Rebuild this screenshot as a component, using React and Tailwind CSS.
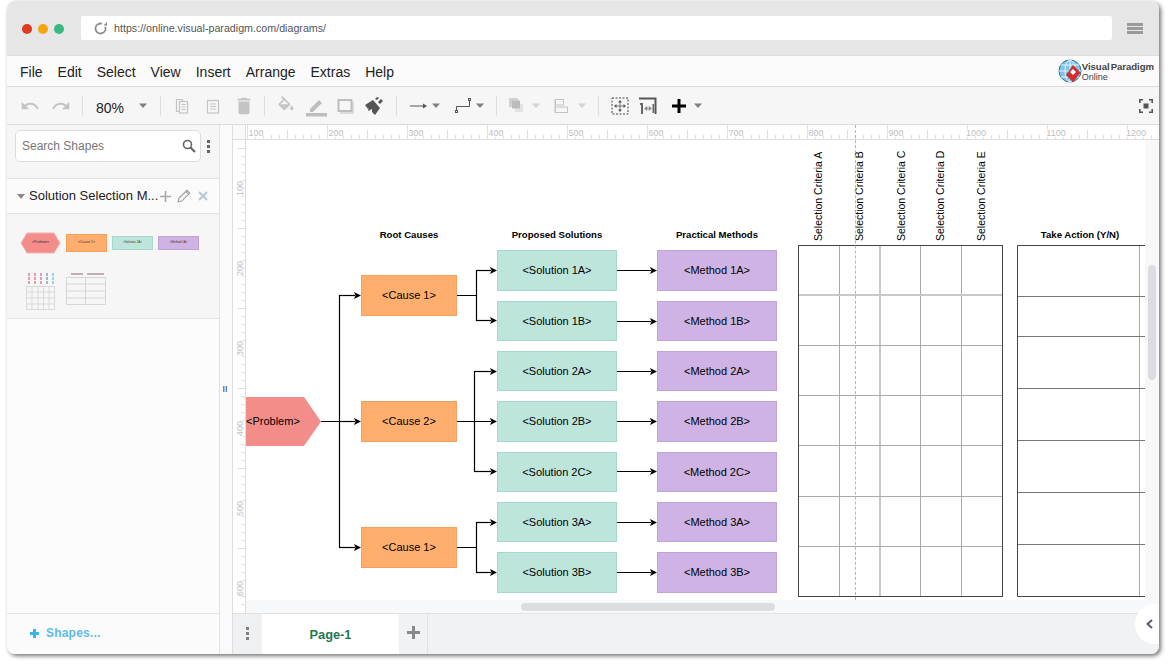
import React from 'react';
import { MdUndo, MdRedo, MdDelete } from 'react-icons/md';

const menus = ['File', 'Edit', 'Select', 'View', 'Insert', 'Arrange', 'Extras', 'Help'];

const rows = [
  { top: 'top-[110px]', h: 'h-[41px]', a: '1A' },
  { top: 'top-[161px]', h: 'h-[40px]', a: '1B' },
  { top: 'top-[211px]', h: 'h-[40px]', a: '2A' },
  { top: 'top-[261px]', h: 'h-[41px]', a: '2B' },
  { top: 'top-[312px]', h: 'h-[40px]', a: '2C' },
  { top: 'top-[362px]', h: 'h-[40px]', a: '3A' },
  { top: 'top-[412px]', h: 'h-[41px]', a: '3B' },
];
const rowY = [270, 321, 371, 421, 471, 522, 572];

const causes = [
  { top: 'top-[135px]', label: '<Cause 1>' },
  { top: 'top-[261px]', label: '<Cause 2>' },
  { top: 'top-[387px]', label: '<Cause 1>' },
];

const criteria = [
  { left: 'left-[566px]', label: 'Selection Criteria A' },
  { left: 'left-[607px]', label: 'Selection Criteria B' },
  { left: 'left-[649px]', label: 'Selection Criteria C' },
  { left: 'left-[688px]', label: 'Selection Criteria D' },
  { left: 'left-[729px]', label: 'Selection Criteria E' },
];

const Sep = ({ ml }) => <div className={`${ml} w-px h-[20px] bg-[#dedede]`} />;

const Caret = ({ ml, light }) => (
  <svg className={ml} width="10" height="6" viewBox="0 0 10 6">
    <path d="M1 0.5h8L5 5z" fill={light ? '#d4d4d4' : '#808080'} />
  </svg>
);

function Toolbar() {
  return (
    <div className="h-[38px] bg-[#f6f6f6] border-b border-[#dcdcdc] flex items-center shrink-0 text-[#c4c4c4]">
      <MdUndo className="ml-[13px]" size={20} />
      <MdRedo className="ml-[11px]" size={20} />
      <Sep ml="ml-[11px]" />
      <span className="ml-[13px] w-[28px] pt-[5px] text-[14px] text-[#222]">80%</span>
      <Caret ml="ml-[14px]" />
      <Sep ml="ml-[12px]" />
      <svg className="ml-[11px]" width="20" height="20" viewBox="0 0 20 20" fill="none" stroke="#c4c4c4" strokeWidth="1.2">
        <path d="M4.5 3.5h6v2M4.5 3.5v12h3" />
        <rect x="7.5" y="5.5" width="8" height="11.5" />
        <path d="M9.5 8.5h4M9.5 11h4M9.5 13.5h4" />
      </svg>
      <svg className="ml-[11px]" width="20" height="20" viewBox="0 0 20 20" fill="none" stroke="#c4c4c4" strokeWidth="1.2">
        <rect x="4.5" y="4.5" width="11" height="12.5" />
        <path d="M7 8h6M7 10.5h6M7 13h6" />
      </svg>
      <MdDelete className="ml-[10px]" size={22} />
      <Sep ml="ml-[9px]" />
      <svg className="ml-[11px]" width="20" height="20" viewBox="0 0 24 24">
        <path d="M16.56 8.94L7.62 0 6.21 1.41l2.38 2.38-5.15 5.15c-.59.59-.59 1.54 0 2.12l5.5 5.5c.29.29.68.44 1.06.44s.77-.15 1.06-.44l5.5-5.5c.59-.58.59-1.53 0-2.12zM5.21 10L10 5.21 14.79 10H5.21zM19 11.5s-2 2.17-2 3.5c0 1.1.9 2 2 2s2-.9 2-2c0-1.33-2-3.5-2-3.5z" fill="#c4c4c4" />
      </svg>
      <svg className="ml-[10px]" width="22" height="22" viewBox="0 0 22 22">
        <path d="M4 14l9-9 3 3-9 9H4z" fill="#bdbdbd" />
        <rect x="0" y="18" width="21" height="3.5" fill="#bdbdbd" />
      </svg>
      <svg className="ml-[9px]" width="18" height="18" viewBox="0 0 18 18">
        <rect x="3" y="5" width="14" height="12" fill="#dcdcdc" />
        <rect x="1.5" y="3" width="13" height="11" fill="#f6f6f6" stroke="#bdbdbd" strokeWidth="2" />
      </svg>
      <svg className="ml-[9px]" width="20" height="20" viewBox="0 0 20 20">
        <path d="M1 9l8-5 7 8-5 7-3-3 0-3-2 1-1 1-1-1 1-2-1 1z" fill="#555" />
        <path d="M11 3l2-2 2 1-2 2zM14 6l3-3 2 2-3 3z" fill="#555" />
      </svg>
      <Sep ml="ml-[12px]" />
      <svg className="ml-[13px]" width="18" height="10" viewBox="0 0 18 10">
        <path d="M0 5h14" stroke="#555" strokeWidth="1" />
        <path d="M13 2.5l4 2.5-4 2.5z" fill="#555" />
      </svg>
      <Caret ml="ml-[3px]" />
      <svg className="ml-[13px]" width="18" height="18" viewBox="0 0 18 18" fill="none" stroke="#555" strokeWidth="1">
        <rect x="1.5" y="13.5" width="2" height="2" />
        <rect x="14.5" y="1.5" width="2" height="2" />
        <path d="M2.5 13.5V9.5h13V3.5" />
      </svg>
      <Caret ml="ml-[3px]" />
      <Sep ml="ml-[11px]" />
      <svg className="ml-[11px]" width="17" height="17" viewBox="0 0 17 17">
        <rect x="1" y="1" width="9" height="9" fill="#d2d2d2" />
        <rect x="7" y="7" width="8" height="8" fill="#e4e4e4" />
        <rect x="4" y="3.5" width="8" height="8" fill="#bcbcbc" />
      </svg>
      <Caret ml="ml-[6px]" light />
      <svg className="ml-[13px]" width="16" height="16" viewBox="0 0 16 16" fill="none" stroke="#c4c4c4" strokeWidth="1">
        <path d="M1 1v14" />
        <rect x="1.5" y="1.5" width="8" height="5.5" />
        <rect x="1.5" y="9" width="12" height="5.5" />
      </svg>
      <Caret ml="ml-[7px]" light />
      <Sep ml="ml-[11px]" />
      <svg className="ml-[12px]" width="18" height="18" viewBox="0 0 18 18">
        <rect x="1" y="1" width="16" height="16" fill="none" stroke="#444" strokeWidth="1" strokeDasharray="2 1.5" />
        <path d="M9 3l2 2.5H7zM9 15l2-2.5H7zM3 9l2.5-2v4zM15 9l-2.5-2v4z" fill="#555" />
        <path d="M9 5v8M5 9h8" stroke="#555" strokeWidth="0.8" />
      </svg>
      <svg className="ml-[10px]" width="18" height="18" viewBox="0 0 18 18">
        <path d="M0 1.5h16.5V17" fill="none" stroke="#555" strokeWidth="2" />
        <path d="M1 6h3v11H2V8H1zM15 7v9h-1.5V7z" fill="#666" />
        <path d="M6 11.5h6M10 9.5l2.5 2-2.5 2zM8 9.5l-2.5 2 2.5 2z" fill="#888" stroke="#888" strokeWidth="0.6" />
      </svg>
      <svg className="ml-[15px]" width="14" height="14" viewBox="0 0 14 14">
        <path d="M5.5 0h3v5.5H14v3H8.5V14h-3V8.5H0v-3h5.5z" fill="#000" />
      </svg>
      <Caret ml="ml-[7px]" />
      <svg className="ml-auto mr-[6px]" width="14" height="14" viewBox="0 0 14 14" fill="none" stroke="#555" strokeWidth="1.6">
        <path d="M0.8 4V0.8H4M10 0.8h3.2V4M0.8 10v3.2H4M10 13.2h3.2V10" />
        <rect x="4.5" y="4.5" width="5" height="5" fill="#555" stroke="none" />
      </svg>
    </div>
  );
}

function Logo() {
  return (
    <div className="ml-auto mr-[5px] flex items-center">
      <svg width="24" height="25" viewBox="0 0 24 25">
        <circle cx="12" cy="12" r="11" fill="#7cc4ea" stroke="#3a6f8f" strokeWidth="1" />
        <path d="M12 1v22M1 12h22M3 6h18M3 18h18" stroke="#e6f4fb" strokeWidth="1" />
        <ellipse cx="12" cy="12" rx="5" ry="11" fill="none" stroke="#e6f4fb" strokeWidth="1" />
        <path d="M15 6l7.5 7.5L15 23.5 8 16z" fill="#cf2f2f" />
        <path d="M15 10l3 3-3 3-3-3z" fill="#fff" />
      </svg>
      <div className="pt-[2px] leading-[10px] text-[#444]">
        <div className="text-[9.6px] font-bold [word-spacing:-1.5px] tracking-[-0.05px] whitespace-nowrap">Visual Paradigm</div>
        <div className="text-[9px]">Online</div>
      </div>
    </div>
  );
}

function SidePanel() {
  return (
    <div className="w-[213px] shrink-0 flex flex-col border-r border-[#e2e2e2] bg-[#fcfcfc]">
      <div className="h-[54px] bg-[#f6f6f6] border-b border-[#e2e2e2] pl-[8px] pt-[5px] flex items-start shrink-0">
        <div className="w-[186px] h-[32px] bg-white border border-[#dcdcdc] rounded-[5px] flex items-center pl-[6px] pr-[4px]">
          <span className="text-[12px] text-[#777]">Search Shapes</span>
          <svg className="ml-auto" width="14" height="14" viewBox="0 0 14 14" fill="none" stroke="#666" strokeWidth="1.6">
            <circle cx="5.5" cy="5.5" r="4" />
            <path d="M8.5 8.5L13 13" strokeWidth="2.2" />
          </svg>
        </div>
        <div className="ml-[6px] mt-[10px] flex flex-col gap-[2px]">
          <div className="w-[3px] h-[3px] bg-[#666]" />
          <div className="w-[3px] h-[3px] bg-[#666]" />
          <div className="w-[3px] h-[3px] bg-[#666]" />
        </div>
      </div>
      <div className="h-[35px] bg-[#fbfbfb] border-b border-[#e2e2e2] flex items-center pl-[10px] shrink-0">
        <svg width="8" height="5" viewBox="0 0 8 5"><path d="M0 0h8L4 5z" fill="#888" /></svg>
        <span className="ml-[4px] text-[13px] text-[#222] whitespace-nowrap">Solution Selection M...</span>
        <svg className="ml-[2px]" width="11" height="11" viewBox="0 0 11 11"><path d="M4.7 0h1.6v4.7H11v1.6H6.3V11H4.7V6.3H0V4.7h4.7z" fill="#a8a8a8" /></svg>
        <svg className="ml-[6px]" width="14" height="14" viewBox="0 0 12 12" fill="none" stroke="#999" strokeWidth="0.9"><path d="M1 11l.6-3L8.5 1.1l2.4 2.4L4 10.4zM7.5 2.1l2.4 2.4" /></svg>
        <svg className="ml-[7px]" width="10" height="10" viewBox="0 0 10 10"><path d="M1 1l8 8M9 1L1 9" stroke="#b7c7d8" strokeWidth="2" /></svg>
      </div>
      <div className="h-[105px] bg-[#f6f6f6] border-b border-[#e2e2e2] shrink-0">
        <div className="pl-[13px] pt-[17px] h-[40px] flex items-center text-[3.5px] text-[#333]">
          <div className="w-[41px] h-[22px] relative flex items-center justify-center">
            <svg className="absolute inset-0" width="41" height="22" viewBox="0 0 41 22"><path d="M7 1h27l6 10-6 10H7L1 11z" fill="#f28d8a" stroke="#f4b1af" /></svg>
            <span className="relative">&lt;Problem&gt;</span>
          </div>
          <div className="ml-[5px] w-[41px] h-[18px] bg-[#ffae6e] border border-[#f4a05c] flex items-center justify-center">&lt;Cause 1&gt;</div>
          <div className="ml-[5px] w-[41px] h-[14px] bg-[#bee5dc] border border-[#a5d8cc] flex items-center justify-center text-[3px]">&lt;Solution 1A&gt;</div>
          <div className="ml-[5px] w-[41px] h-[14px] bg-[#ceb3e4] border border-[#bda3d8] flex items-center justify-center text-[3px]">&lt;Method 1A&gt;</div>
        </div>
        <div className="pl-[19px] mt-[19px] flex items-start">
          <svg width="30" height="38" viewBox="0 0 30 38">
            <path d="M3 0v12" stroke="#c2497f" strokeDasharray="3 1" />
            <path d="M9 0v12" stroke="#d0455e" strokeDasharray="3 1" />
            <path d="M15 0v12" stroke="#c2497f" strokeDasharray="3 1" />
            <path d="M21 0v12" stroke="#55708f" strokeDasharray="3 1" />
            <path d="M27 0v12" stroke="#3fb4c8" strokeDasharray="3 1" />
            <path d="M0.5 13.5h28v23h-28zM0.5 19h28M0.5 25h28M0.5 31h28M6 13.5v23M12 13.5v23M17.5 13.5v23M23 13.5v23" fill="none" stroke="#d9d9d9" />
          </svg>
          <svg className="ml-[10px]" width="41" height="34" viewBox="0 0 41 34">
            <path d="M5 1h12M21 1h17" stroke="#8a6a7a" strokeWidth="1" />
            <path d="M0.5 4.5h39v27h-39zM0.5 11h39M0.5 18h39M0.5 25h39M19.5 4.5v27" fill="none" stroke="#d6d6d6" />
          </svg>
        </div>
      </div>
      <div className="flex-1" />
      <div className="h-[41px] border-t border-[#e2e2e2] bg-[#fbfbfb] flex items-center pl-[23px] pb-[2px] shrink-0">
        <svg width="9" height="9" viewBox="0 0 9 9"><path d="M3 0h3v3h3v3H6v3H3V6H0V3h3z" fill="#35b6ee" /></svg>
        <span className="ml-[7px] text-[12px] font-bold text-[#5dbbe8] tracking-[0.2px]">Shapes...</span>
      </div>
    </div>
  );
}

function RulerTop() {
  const ticks = [];
  for (let i = 0; i < 114; i++) {
    const x = 1.5 + i * 8;
    const len = i % 10 === 0 ? 14 : i % 5 === 0 ? 9 : 4;
    ticks.push(<path key={i} d={`M${x} ${14 - len}V14`} stroke="#e0e0e0" strokeWidth="1" />);
  }
  const labels = [];
  for (let i = 0; i < 12; i++) {
    labels.push(
      <text key={i} x={10 + i * 80} y="11" fontSize="9" textAnchor="middle" fill="#c0c0c0" stroke="white" strokeWidth="2" paintOrder="stroke">
        {(i + 1) * 100}
      </text>
    );
  }
  return (
    <svg className="block" width="913" height="15" viewBox="0 0 913 15">
      {ticks}
      {labels}
      <path d="M0 14.5H913" stroke="#dcdde3" strokeWidth="1" />
    </svg>
  );
}

function RulerLeft() {
  const ticks = [];
  for (let i = 0; i < 58; i++) {
    const y = 8.5 + i * 8;
    ticks.push(<path key={i} d={`M${i % 10 === 0 ? 5 : 8} ${y}H12`} stroke="#e0e0e0" strokeWidth="1" />);
  }
  const labels = [];
  for (let i = 0; i < 6; i++) {
    const y = 48.5 + i * 80;
    labels.push(
      <text key={i} transform={`rotate(-90 10 ${y})`} x="10" y={y} fontSize="9" textAnchor="middle" fill="#c0c0c0" stroke="white" strokeWidth="2" paintOrder="stroke">
        {(i + 1) * 100}
      </text>
    );
  }
  return (
    <svg className="block shrink-0 bg-white" width="13" height="473" viewBox="0 0 13 473">
      {ticks}
      {labels}
      <path d="M12.5 0V473" stroke="#dcdde3" strokeWidth="1" />
    </svg>
  );
}

const Arrow = ({ x1, y, x2 }) => (
  <g>
    <path d={`M${x1} ${y}H${x2 - 6}`} stroke="#000" strokeWidth="1.2" />
    <path d={`M${x2 - 7} ${y - 3.5}L${x2} ${y}l-7 3.5 1.5-3.5z`} fill="#000" />
  </g>
);

function Connectors() {
  return (
    <svg className="absolute inset-0" width="899" height="460" viewBox="246 140 899 460">
      <path d="M321 421.5H340M339.5 295V547" stroke="#000" strokeWidth="1.2" fill="none" />
      <Arrow x1={339} y={295.5} x2={361} />
      <Arrow x1={339} y={421.5} x2={361} />
      <Arrow x1={339} y={547.5} x2={361} />
      <path d="M457 295.5H476.5M476.5 270V321" stroke="#000" strokeWidth="1.2" fill="none" />
      <path d="M474.5 371V471.5" stroke="#000" strokeWidth="1.2" fill="none" />
      <path d="M457 547.5H476.5M476.5 522V572.5" stroke="#000" strokeWidth="1.2" fill="none" />
      <Arrow x1={476} y={270.5} x2={497} />
      <Arrow x1={476} y={320.5} x2={497} />
      <Arrow x1={474} y={371.5} x2={497} />
      <Arrow x1={457} y={421.5} x2={497} />
      <Arrow x1={474} y={471.5} x2={497} />
      <Arrow x1={476} y={522.5} x2={497} />
      <Arrow x1={476} y={572.5} x2={497} />
      {rowY.map((y) => <Arrow key={y} x1={617} y={y + 0.5} x2={657} />)}

      {/* criteria table */}
      <path d="M839.5 245V597M920.5 245V597M961.5 245V597" stroke="#aaa" strokeWidth="1" />
      <path d="M880 245V597" stroke="#c8c8c8" strokeWidth="2" />
      <path d="M798 295H1002" stroke="#c8c8c8" strokeWidth="2" />
      <path d="M798 345.5H1002M798 395.5H1002M798 445.5H1002M798 496.5H1002M798 546.5H1002" stroke="#aaa" strokeWidth="1" />
      <rect x="798.5" y="245.5" width="204" height="351" fill="none" stroke="#444" strokeWidth="1" />

      {/* action table, cut off by the scroll area */}
      <path d="M1139.5 245V597" stroke="#aaa" strokeWidth="1" />
      <path d="M1017 296.5H1145M1017 336.5H1145M1017 388.5H1145M1017 440.5H1145M1017 492.5H1145M1017 544.5H1145" stroke="#777" strokeWidth="1" />
      <path d="M1146 245.5H1017.5V596.5H1146" fill="none" stroke="#444" strokeWidth="1" />
    </svg>
  );
}

function Canvas() {
  return (
    <div className="relative w-[899px] h-[460px] bg-white overflow-hidden shrink-0 text-[11px] text-black">
      <Connectors />

      <div className="absolute left-0 top-[257px] w-[75px] h-[49px]">
        <svg className="absolute inset-0" width="75" height="49" viewBox="0 0 75 49"><path d="M0 0h58l17 24.5L58 49H0z" fill="#f28d8a" /></svg>
        <span className="absolute left-0 top-[16px]">&lt;Problem&gt;</span>
      </div>

      {causes.map((c, i) => (
        <div key={i} className={`absolute left-[115px] w-[96px] h-[41px] ${c.top} bg-[#ffae6e] border border-[#f4a05c] flex items-center justify-center`}>
          {c.label}
        </div>
      ))}

      {rows.map((r) => (
        <div key={r.a} className={`absolute left-[251px] w-[120px] ${r.h} ${r.top} bg-[#bee5dc] border border-[#a5d8cc] flex items-center justify-center`}>
          {`<Solution ${r.a}>`}
        </div>
      ))}

      {rows.map((r) => (
        <div key={r.a} className={`absolute left-[411px] w-[120px] ${r.h} ${r.top} bg-[#ceb3e4] border border-[#bda3d8] flex items-center justify-center`}>
          {`<Method ${r.a}>`}
        </div>
      ))}

      <div className="absolute left-[113px] top-[88px] w-[100px] text-center text-[9.6px] font-bold">Root Causes</div>
      <div className="absolute left-[251px] top-[88px] w-[120px] text-center text-[9.6px] font-bold">Proposed Solutions</div>
      <div className="absolute left-[411px] top-[88px] w-[120px] text-center text-[9.6px] font-bold">Practical Methods</div>
      <div className="absolute left-[774px] top-[88px] w-[120px] text-center text-[9.6px] font-bold">Take Action (Y/N)</div>

      {criteria.map((c) => (
        <div key={c.label} className={`absolute top-[11px] h-[90px] w-[12px] ${c.left} [writing-mode:vertical-rl] rotate-180 text-[10.5px] leading-[12px] whitespace-nowrap`}>
          {c.label}
        </div>
      ))}
    </div>
  );
}

export default function App() {
  return (
    <div className="w-[1170px] h-[665px] bg-white pl-[7px] pt-[1px] overflow-hidden font-['Liberation_Sans',Arial,sans-serif]">
      <div className="w-[1152px] h-[653px] flex flex-col rounded-[8px] overflow-hidden shadow-[2px_2px_4px_rgba(0,0,0,0.55)] bg-white">
        {/* browser chrome */}
        <div className="h-[55px] bg-[#e6e6e6] border-b border-[#dedede] flex items-start pt-[15px] shrink-0">
          <div className="ml-[15px] mt-[8px] flex gap-[6px]">
            <div className="w-[10px] h-[10px] rounded-full bg-[#e0391b]" />
            <div className="w-[10px] h-[10px] rounded-full bg-[#f8a50e]" />
            <div className="w-[10px] h-[10px] rounded-full bg-[#37b97f]" />
          </div>
          <div className="ml-[17px] w-[1031px] h-[24px] bg-white rounded-[2px] flex items-center pl-[13px]">
            <svg width="13" height="13" viewBox="0 0 13 13" fill="none">
              <circle cx="6.5" cy="6.5" r="5" stroke="#8a8a8a" strokeWidth="1.8" strokeDasharray="26 5" transform="rotate(-20 6.5 6.5)" />
              <path d="M9.5 3.5H13V0z" fill="#8a8a8a" />
            </svg>
            <span className="ml-[7px] text-[10.7px] text-[#555]">https://online.visual-paradigm.com/diagrams/</span>
          </div>
          <div className="ml-[15px] mt-[7px] w-[16px] flex flex-col gap-[1px]">
            <div className="h-[3px] bg-[#9a9a9a]" />
            <div className="h-[3px] bg-[#9a9a9a]" />
            <div className="h-[3px] bg-[#9a9a9a]" />
          </div>
        </div>

        {/* menu bar */}
        <div className="h-[31px] bg-[#fbfbfb] border-b border-[#dcdcdc] flex items-center pl-[13px] text-[14px] text-[#222] shrink-0">
          <div className="flex gap-[15px] pt-[2px]">
            {menus.map((m) => <span key={m}>{m}</span>)}
          </div>
          <Logo />
        </div>

        <Toolbar />

        <div className="flex-1 flex min-h-0">
          <SidePanel />

          {/* splitter */}
          <div className="w-[13px] shrink-0 bg-[#fafafa] border-r border-[#dcdde3] flex items-center justify-center pr-[2px]">
            <span className="text-[9px] leading-none text-[#333]">II</span>
          </div>

          <div className="relative flex-1 flex flex-col min-w-0">
            <div className="flex h-[15px] bg-white shrink-0">
              <div className="w-[13px] shrink-0 bg-[#f9f9f9] border-r border-b border-[#dcdde3]" />
              <RulerTop />
            </div>

            <div className="flex bg-[#f7f8fa]">
              <RulerLeft />
              <div className="flex flex-col">
                <Canvas />
                {/* horizontal scrollbar */}
                <div className="h-[13px] pt-[3px] pl-[275px]">
                  <div className="w-[254px] h-[8px] rounded-full bg-[#dcdde0]" />
                </div>
              </div>
              {/* vertical scrollbar */}
              <div className="pl-[3px] pt-[125px]">
                <div className="w-[8px] h-[115px] rounded-full bg-[#dcdde0]" />
              </div>
            </div>

            {/* guide line */}
            <div className="absolute left-[622px] top-0 h-[475px] border-l border-dashed border-[#b5b5b5]" />

            {/* page tabs */}
            <div className="h-[41px] flex bg-[#f1f2f4] border-t border-[#e2e2e2] shrink-0">
              <div className="w-[29px] flex flex-col items-center justify-center gap-[2px] pb-[2px] bg-[#eff0f2]">
                <div className="w-[3px] h-[3px] bg-[#808080]" />
                <div className="w-[3px] h-[3px] bg-[#808080]" />
                <div className="w-[3px] h-[3px] bg-[#808080]" />
              </div>
              <div className="w-[137px] bg-white flex items-center justify-center pt-[2px] text-[12.8px] font-bold text-[#1d7a4f]">Page-1</div>
              <div className="w-[29px] border-r border-[#e2e2e2] flex items-center justify-center pb-[4px] pl-[1px]">
                <svg width="13" height="13" viewBox="0 0 13 13"><path d="M5 0h3v5h5v3H8v5H5V8H0V5h5z" fill="#8a8a8a" /></svg>
              </div>
            </div>

            {/* side collapse tab */}
            <div className="absolute right-0 top-[479px] w-[24px] h-[40px] bg-white rounded-l-full flex items-center pl-[11px]">
              <svg width="7" height="10" viewBox="0 0 7 10" fill="none"><path d="M6 1L1.5 5 6 9" stroke="#555566" strokeWidth="1.8" /></svg>
            </div>
          </div>
        </div>
      </div>
    </div>
  );
}
